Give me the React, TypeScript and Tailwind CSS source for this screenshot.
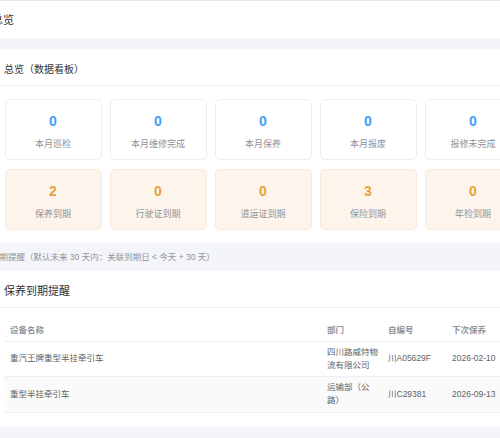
import React from 'react';

const font = { fontFamily: '"Liberation Sans", "Noto Sans CJK SC", sans-serif' };

const topStats = [
  { value: 0, label: '本月巡检' },
  { value: 0, label: '本月维修完成' },
  { value: 0, label: '本月保养' },
  { value: 0, label: '本月报废' },
  { value: 0, label: '报修未完成' },
];

const expireStats = [
  { value: 2, label: '保养到期' },
  { value: 0, label: '行驶证到期' },
  { value: 0, label: '道运证到期' },
  { value: 3, label: '保险到期' },
  { value: 0, label: '年检到期' },
];

const rows = [
  { name: '重汽王牌重型半挂牵引车', dept: '四川路威特物流有限公司', code: '川A05629F', next: '2026-02-10' },
  { name: '重型半挂牵引车', dept: '运输部（公路）', code: '川C29381', next: '2026-09-13' },
];

const StatCard: React.FC<{ value: number; label: string; warn?: boolean }> = ({ value, label, warn }) => (
  <div
    className={`w-[97px] h-[61px] shrink-0 rounded-[5px] border flex flex-col items-center justify-center pt-[3px] ${
      warn ? 'bg-[#fdf5eb] border-[#f7eadb]' : 'bg-white border-[#ebeef5]'
    }`}
  >
    <div className={`text-[14px] leading-[16px] font-bold ${warn ? 'text-[#e6a23c]' : 'text-[#409eff]'}`}>{value}</div>
    <div className="mt-[10px] text-[9px] leading-[11px] text-[#909399]">{label}</div>
  </div>
);

const App: React.FC = () => {
  return (
    <div className="w-[500px] h-[438px] overflow-hidden bg-[#f4f5f9]" style={font}>
      <div className="border-t border-[#e4e6eb]" />
      <div className="bg-white h-[37px] flex items-center pt-[1px]">
        <span className="-ml-[8px] text-[11px] text-[#303133]">总览</span>
      </div>

      <div className="mt-[11px] bg-white w-[540px]">
        <div className="h-[37px] flex items-center pt-[4px] px-[4px] border-b border-[#ebeef5]">
          <span className="text-[10px] text-[#303133]">总览（数据看板）</span>
        </div>
        <div className="pt-[13px] pb-[13px] px-[4.5px] flex flex-col gap-[9px]">
          <div className="flex gap-[8px]">
            {topStats.map((s) => (
              <StatCard key={s.label} value={s.value} label={s.label} />
            ))}
          </div>
          <div className="flex gap-[8px]">
            {expireStats.map((s) => (
              <StatCard key={s.label} value={s.value} label={s.label} warn />
            ))}
          </div>
        </div>
      </div>

      <div className="h-[28px] flex items-center pt-[1px]">
        <span className="-ml-[9px] text-[8.5px] text-[#909399] whitespace-nowrap">
          到期提醒（默认未来 30 天内：关联到期日 &lt; 今天 + 30 天）
        </span>
      </div>

      <div className="bg-white w-[560px]">
        <div className="h-[37px] flex items-center pt-[4px] px-[4px] border-b border-[#ebeef5]">
          <span className="text-[11px] text-[#303133]">保养到期提醒</span>
        </div>
        <div className="pt-[13px] pb-[14px] pl-[4px]">
          <table className="border-collapse text-[8.5px] text-[#606266] w-[540px] table-fixed">
            <colgroup>
              <col className="w-[317px]" />
              <col className="w-[62px]" />
              <col className="w-[64px]" />
              <col className="w-[97px]" />
            </colgroup>
            <thead>
              <tr className="border-b border-[#ebeef5] h-[20px]">
                <th className="text-left font-bold text-[#909399] pl-[6px]">设备名称</th>
                <th className="text-left font-bold text-[#909399] pl-[6px]">部门</th>
                <th className="text-left font-bold text-[#909399] pl-[5px]">自编号</th>
                <th className="text-left font-bold text-[#909399] pl-[5px]">下次保养</th>
              </tr>
            </thead>
            <tbody>
              {rows.map((r, i) => (
                <tr key={r.code} className={`border-b border-[#ebeef5] h-[35.5px] ${i % 2 === 1 ? 'bg-[#fafafa]' : ''}`}>
                  <td className="pl-[6px]">{r.name}</td>
                  <td className="pl-[6px] pr-[1px] leading-[13px] py-[4px]">{r.dept}</td>
                  <td className="pl-[5px]">{r.code}</td>
                  <td className="pl-[5px]">{r.next}</td>
                </tr>
              ))}
            </tbody>
          </table>
        </div>
      </div>
    </div>
  );
};

export default App;
